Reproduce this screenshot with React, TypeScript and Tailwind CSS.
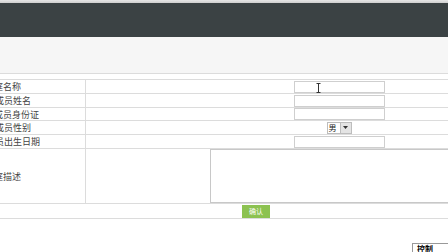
const font = { fontFamily: '"Noto Sans CJK SC", "Noto Sans", sans-serif' };

const rows = [
  { label: "家庭名称", shift: "-ml-[15px]", h: "h-[14px]", kind: "input", cursor: true },
  { label: "家庭成员姓名", shift: "-ml-[23px]", h: "h-[14px]", kind: "input" },
  { label: "家庭成员身份证", shift: "-ml-[24px]", h: "h-[13px]", kind: "input" },
  { label: "家庭成员性别", shift: "-ml-[23px]", h: "h-[14px]", kind: "select" },
  { label: "家庭成员出生日期", shift: "-ml-[32px]", h: "h-[14px]", kind: "input" },
];

function TextInput({ cursor }: { cursor?: boolean }) {
  return (
    <div className="relative w-[91px] h-[12px] bg-white border border-[#cfcfcf]">
      {cursor && (
        <svg className="absolute left-[21px] top-[1px]" width="5" height="10" viewBox="0 0 5 10">
          <path d="M0.5 0.5h4M2.5 0.5v9M0.5 9.5h4" stroke="#333" strokeWidth="1" fill="none" />
        </svg>
      )}
    </div>
  );
}

function GenderSelect() {
  return (
    <div className="flex h-[12px] border border-[#bdbdbd] bg-white">
      <span className="w-[12px] text-[8px] leading-[10px] text-[#222] pl-[1px]">男</span>
      <span className="w-[11px] bg-[#e4e4e4] border-l border-[#bdbdbd] flex items-center justify-center">
        <svg width="5" height="3" viewBox="0 0 5 3">
          <path d="M0 0h5L2.5 3z" fill="#333" />
        </svg>
      </span>
    </div>
  );
}

export default function App() {
  return (
    <div className="relative w-[448px] h-[252px] overflow-hidden bg-white text-[#444]" style={font}>
      <div className="h-[3px] bg-gradient-to-b from-[#e6e6e6] to-[#cfcfcf]" />
      <div className="h-[34px] bg-[#3b4244]" />
      <div className="h-[37px] bg-[#f6f6f6] border-b border-[#dcdcdc]" />
      <div className="h-[6px] border-b border-[#dcdcdc]" />

      {rows.map((r) => (
        <div key={r.label} className={`flex ${r.h} border-b border-[#dcdcdc]`}>
          <div className="w-[86px] shrink-0 border-r border-[#dcdcdc] flex items-center overflow-hidden">
            <span className={`${r.shift} whitespace-nowrap text-[9px] leading-none`}>{r.label}</span>
          </div>
          <div className="flex-1 overflow-hidden">
            <div className="w-[506px] h-full flex items-center justify-center">
              {r.kind === "input" ? <TextInput cursor={r.cursor} /> : <GenderSelect />}
            </div>
          </div>
        </div>
      ))}

      <div className="flex h-[55px] border-b border-[#dcdcdc]">
        <div className="w-[86px] shrink-0 border-r border-[#dcdcdc] flex items-center overflow-hidden">
          <span className="-ml-[15px] whitespace-nowrap text-[9px] leading-none">家庭描述</span>
        </div>
        <div className="flex-1 overflow-hidden">
          <div className="w-[506px] h-full flex justify-center">
            <div className="w-[258px] h-full bg-white border border-[#c8c8c8]" />
          </div>
        </div>
      </div>

      <div className="h-[15px] border-b border-[#dcdcdc] flex items-center pl-[242px]">
        <button className="w-[28px] h-[13px] bg-[#8cc251] text-white text-[7px] leading-none">确认</button>
      </div>

      <div className="absolute left-[412px] top-[243px] w-[44px] h-[14px] bg-white border border-[#999] pl-[4px] pt-[1px] text-[8px] leading-none text-black font-bold">
        控制
      </div>
    </div>
  );
}
